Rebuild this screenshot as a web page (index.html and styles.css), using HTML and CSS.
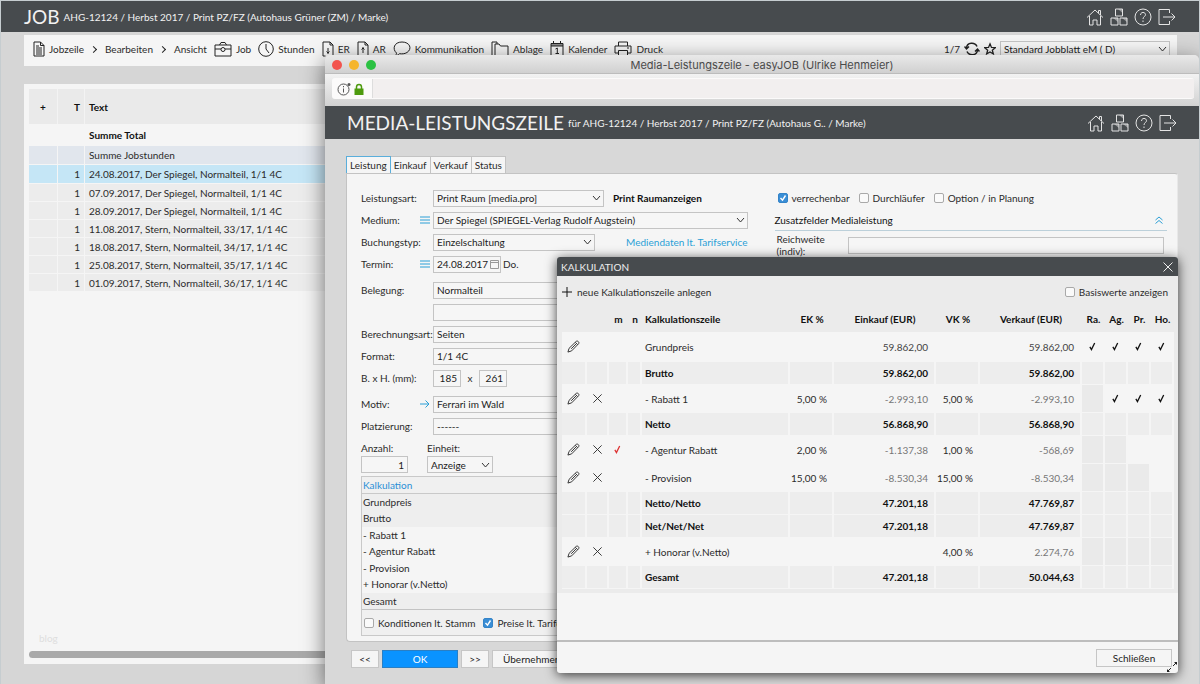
FILE: index.html
```html
<!DOCTYPE html>
<html lang="de">
<head>
<meta charset="utf-8">
<title>JOB AHG-12124</title>
<link rel="stylesheet" href="styles.css">
</head>
<body>
<svg class="sprite" aria-hidden="true">
  <symbol id="i-home" viewBox="0 0 18 18"><path d="M1 9.500 9 2l8 7.500M3.500 8v9H7v-5h4v5h3.500V8M12.500 5V2.500h2V7"/></symbol>
  <symbol id="i-boxes" viewBox="0 0 18 18"><path d="M5.500 1h7v7h-7zM1 10h7v7H1zM10 10h7v7h-7z"/><path class="solid" d="M8 1h4.500v4zM3 10h5v4zM12 10h5v4z"/></symbol>
  <symbol id="i-help" viewBox="0 0 18 18"><circle cx="9" cy="9" r="8"/><path d="M6.500 7c0-3.500 5-3.200 5-.3 0 1.800-2.500 2-2.500 4.300M9 12.500V14"/></symbol>
  <symbol id="i-exit" viewBox="0 0 18 18"><path d="M11.500 5V1.500H1v15h10.500V13M5 9h12M13.500 5.500 17 9l-3.500 3.500"/></symbol>
  <symbol id="i-doc" viewBox="0 0 12 16"><path d="M1 1h6.500L11 4.500V15H1zM7.500 1v3.500H11M3 5h3M3 7h6M3 9h6M3 11h6M3 13h6"/></symbol>
  <symbol id="i-case" viewBox="0 0 18 16"><path d="M1 4h16v11H1zM5.500 4 7 1.500h4L12.500 4M1 8h6M11 8h6"/><circle cx="9" cy="8.500" r="2"/></symbol>
  <symbol id="i-clock" viewBox="0 0 16 16"><circle cx="8" cy="8" r="7.300"/><path d="M8 3v5l3 4"/></symbol>
  <symbol id="i-in" viewBox="0 0 12 16"><path d="M3.500 15H1V1h7l3 3v11H8.500M8 1v3h3M6 7v6M4.500 10.500 6 12l1.500-1.500"/></symbol>
  <symbol id="i-out" viewBox="0 0 12 16"><path d="M3.500 15H1V1h7l3 3v11H8.500M8 1v3h3M6 6v6M4.500 8.500 6 7l1.500 1.500"/></symbol>
  <symbol id="i-talk" viewBox="0 0 18 16"><path d="M2 15c1-1 1.500-2 1.500-3C-1 8 1 1 9 1s10.500 7 5 10.500c-2.500 1.500-5 1.500-7.500 1.200C5 14 4 14.500 2 15z"/></symbol>
  <symbol id="i-folder" viewBox="0 0 18 16"><path d="M1 15V1h5v2M4 15V3h4l1.500 2H17v10z"/></symbol>
  <symbol id="i-cal" viewBox="0 0 14 16"><path d="M1 2.500h12V15H1zM1 5h12M3.500 0v3M10.500 0v3M5.500 8 7.300 7v5.500M5.500 12.500h3.500"/><path class="solid" d="M1 2.500h12V5H1z"/></symbol>
  <symbol id="i-print" viewBox="0 0 18 16"><path d="M4.500 5V1h9v4M4.500 12H1V5h16v7h-3.500M4.500 9.500h9V15h-9zM13 7h2"/></symbol>
  <symbol id="i-reload" viewBox="0 0 16 14"><path d="M2.500 6C3 0 11 0 13 4.500M13.500 8c-.5 6-8.500 6-10.500 1.500M.5 4.500l2 2.500L5 4.500M11 9.500 13.500 7l2 2.500"/></symbol>
  <symbol id="i-star" viewBox="0 0 14 14"><path d="m7 1 1.700 4.200 4.500.3-3.500 2.900 1.200 4.400L7 10.400l-3.900 2.400 1.200-4.400L.8 5.500l4.500-.3z"/></symbol>
  <symbol id="i-pen" viewBox="0 0 14 14"><path d="M1 13l1.200-4L9.800 1.600c1.500-1.400 4 .9 2.600 2.500L5 11.700zM9 2.500 11.500 5M10 4 4.500 9.500"/></symbol>
  <symbol id="i-x" viewBox="0 0 12 12"><path d="m1.500 1.500 9 9M10.500 1.500l-9 9"/></symbol>
  <symbol id="i-check" viewBox="0 0 8 10"><path d="M1 5.500 2.800 8.500 6.500 1"/></symbol>
  <symbol id="i-list" viewBox="0 0 10 8"><path d="M0 1h10M0 4h10M0 7h10"/></symbol>
  <symbol id="i-arrow" viewBox="0 0 10 8"><path d="M0 4h9M5.500.5 9 4 5.500 7.500"/></symbol>
</svg>

<main class="desktop">
  <header class="bar">
    <h1 class="bar-title">JOB</h1>
    <p class="bar-sub">AHG-12124 / Herbst 2017 / Print PZ/FZ (Autohaus Grüner (ZM) / Marke)</p>
    <nav class="bar-icons">
      <a href="#" aria-label="Start"><svg><use href="#i-home"/></svg></a>
      <a href="#" aria-label="Module"><svg><use href="#i-boxes"/></svg></a>
      <a href="#" aria-label="Hilfe"><svg><use href="#i-help"/></svg></a>
      <a href="#" aria-label="Abmelden"><svg><use href="#i-exit"/></svg></a>
    </nav>
  </header>

  <nav class="tools">
    <button class="tool"><svg class="w12"><use href="#i-doc"/></svg>Jobzeile</button>
    <button class="tool"><i class="caret"></i>Bearbeiten</button>
    <button class="tool"><i class="caret"></i>Ansicht</button>
    <button class="tool"><svg class="w18"><use href="#i-case"/></svg>Job</button>
    <button class="tool"><svg class="w16"><use href="#i-clock"/></svg>Stunden</button>
    <button class="tool"><svg class="w12"><use href="#i-in"/></svg>ER</button>
    <button class="tool"><svg class="w12"><use href="#i-out"/></svg>AR</button>
    <button class="tool"><svg class="w18"><use href="#i-talk"/></svg>Kommunikation</button>
    <button class="tool"><svg class="w18"><use href="#i-folder"/></svg>Ablage</button>
    <button class="tool"><svg class="w14"><use href="#i-cal"/></svg>Kalender</button>
    <button class="tool"><svg class="w18"><use href="#i-print"/></svg>Druck</button>
    <div class="tools-end">
      <span>1/7</span>
      <button class="tool" aria-label="Aktualisieren"><svg class="w16 bold"><use href="#i-reload"/></svg></button>
      <button class="tool" aria-label="Favorit"><svg class="w12 bold"><use href="#i-star"/></svg></button>
      <select class="field view" aria-label="Jobblatt"><option>Standard Jobblatt eM ( D)</option></select>
    </div>
  </nav>

  <section class="jobs">
    <table class="job-table">
      <colgroup><col class="j-plus"><col class="j-t"><col></colgroup>
      <thead><tr><th>+</th><th class="num">T</th><th>Text</th></tr></thead>
      <tbody>
        <tr class="total"><td></td><td></td><td>Summe Total</td></tr>
        <tr class="hours"><td></td><td></td><td>Summe Jobstunden</td></tr>
        <tr class="active"><td></td><td class="num">1</td><td>24.08.2017, Der Spiegel, Normalteil, 1/1 4C</td></tr>
        <tr><td></td><td class="num">1</td><td>07.09.2017, Der Spiegel, Normalteil, 1/1 4C</td></tr>
        <tr><td></td><td class="num">1</td><td>28.09.2017, Der Spiegel, Normalteil, 1/1 4C</td></tr>
        <tr><td></td><td class="num">1</td><td>11.08.2017, Stern, Normalteil, 33/17, 1/1 4C</td></tr>
        <tr><td></td><td class="num">1</td><td>18.08.2017, Stern, Normalteil, 34/17, 1/1 4C</td></tr>
        <tr><td></td><td class="num">1</td><td>25.08.2017, Stern, Normalteil, 35/17, 1/1 4C</td></tr>
        <tr><td></td><td class="num">1</td><td>01.09.2017, Stern, Normalteil, 36/17, 1/1 4C</td></tr>
      </tbody>
    </table>
    <p class="mark">blog</p>
    <div class="scroll"></div>
  </section>

  <section class="window">
    <div class="chrome-title">
      <span class="lights"><i class="close-light"></i><i class="min-light"></i><i class="max-light"></i></span>
      <span>Media-Leistungszeile - easyJOB (Ulrike Henmeier)</span>
    </div>
    <div class="chrome-url">
      <div class="url">
        <svg class="info" viewBox="0 0 14 14"><circle cx="6.500" cy="7.500" r="5.500"/><path d="M6.500 6.500v4M6.500 4v1.300"/><circle class="dot" cx="12" cy="2.500" r="1.500"/></svg>
        <svg class="lock" viewBox="0 0 10 12"><path class="shackle" d="M2.500 6V4c0-3.500 5-3.500 5 0v2"/><path class="case" d="M.5 5.500h9V12h-9z"/></svg>
        <input class="url-input" type="text" aria-label="Adresse">
      </div>
    </div>
    <header class="bar bar-media">
      <h2 class="bar-title">MEDIA-LEISTUNGSZEILE</h2>
      <p class="bar-sub">für AHG-12124 / Herbst 2017 / Print PZ/FZ (Autohaus G.. / Marke)</p>
      <nav class="bar-icons">
        <a href="#" aria-label="Start"><svg><use href="#i-home"/></svg></a>
        <a href="#" aria-label="Module"><svg><use href="#i-boxes"/></svg></a>
        <a href="#" aria-label="Hilfe"><svg><use href="#i-help"/></svg></a>
        <a href="#" aria-label="Abmelden"><svg><use href="#i-exit"/></svg></a>
      </nav>
    </header>

    <div class="media">
      <nav class="tabs">
        <button class="tab on">Leistung</button><button class="tab">Einkauf</button><button class="tab">Verkauf</button><button class="tab">Status</button>
      </nav>
      <form class="panel">
        <div class="col-left">
          <div class="row"><label for="art">Leistungsart:</label>
            <select id="art" class="field w-art"><option>Print Raum [media.pro]</option></select><strong>Print Raumanzeigen</strong></div>
          <div class="row"><label for="medium">Medium:</label><svg class="hint"><use href="#i-list"/></svg>
            <select id="medium" class="field grow"><option>Der Spiegel (SPIEGEL-Verlag Rudolf Augstein)</option></select></div>
          <div class="row"><label for="typ">Buchungstyp:</label>
            <select id="typ" class="field w-typ"><option>Einzelschaltung</option></select><a class="tarif" href="#">Mediendaten lt. Tarifservice</a></div>
          <div class="row"><label for="termin">Termin:</label><svg class="hint"><use href="#i-list"/></svg>
            <input id="termin" class="field w-date" value="24.08.2017"><span class="day">Do.</span></div>
          <div class="row space"><label for="beleg">Belegung:</label><input id="beleg" class="field grow" value="Normalteil"></div>
          <div class="row"><label for="beleg2"></label><input id="beleg2" class="field grow" aria-label="Belegung Zusatz"></div>
          <div class="row"><label for="berech">Berechnungsart:</label><input id="berech" class="field grow" value="Seiten"></div>
          <div class="row"><label for="format">Format:</label><input id="format" class="field grow" value="1/1 4C"></div>
          <div class="row"><label for="breite">B. x H. (mm):</label><input id="breite" class="field w-mm" value="185"><span class="times">x</span><input class="field w-mm" aria-label="Höhe" value="261"></div>
          <div class="row space"><label for="motiv">Motiv:</label><svg class="hint"><use href="#i-arrow"/></svg><input id="motiv" class="field grow" value="Ferrari im Wald"></div>
          <div class="row"><label for="platz">Platzierung:</label><input id="platz" class="field grow" value="------"></div>
          <div class="amounts">
            <label>Anzahl:<input class="field w-count" value="1"></label>
            <label>Einheit:<select class="field w-unit"><option>Anzeige</option></select></label>
          </div>
          <div class="calc">
            <h3>Kalkulation</h3>
            <ul>
              <li class="sum">Grundpreis</li><li class="sum">Brutto</li><li>- Rabatt 1</li><li>- Agentur Rabatt</li><li>- Provision</li><li>+ Honorar (v.Netto)</li><li class="sum">Gesamt</li>
            </ul>
            <div class="calc-opts">
              <label class="check"><input type="checkbox">Konditionen lt. Stamm</label>
              <label class="check"><input type="checkbox" checked>Preise lt. Tarifdaten</label>
            </div>
          </div>
        </div>
        <div class="col-right">
          <div class="checks">
            <label class="check"><input type="checkbox" checked>verrechenbar</label>
            <label class="check"><input type="checkbox">Durchläufer</label>
            <label class="check"><input type="checkbox">Option / in Planung</label>
          </div>
          <h3 class="section">Zusatzfelder Medialeistung<svg viewBox="0 0 8 8"><path d="m.5 4 3.500-3 3.500 3M.5 7.500 4 4.500l3.500 3"/></svg></h3>
          <div class="reach"><label for="reach">Reichweite (indiv):</label><input id="reach" class="field grow"></div>
        </div>
      </form>
      <div class="actions">
        <button class="btn step">&lt;&lt;</button><button class="btn ok">OK</button><button class="btn step">&gt;&gt;</button><button class="btn apply">Übernehmen</button>
      </div>
    </div>

    <section class="dialog" role="dialog" aria-label="Kalkulation">
      <header class="dialog-bar"><h2>KALKULATION</h2><button aria-label="Dialog schließen"><svg><use href="#i-x"/></svg></button></header>
      <div class="dialog-top">
        <button class="add"><svg viewBox="0 0 10 10"><path d="M5 0v10M0 5h10"/></svg>neue Kalkulationszeile anlegen</button>
        <label class="check"><input type="checkbox">Basiswerte anzeigen</label>
      </div>
      <div class="grid-wrap">
      <table class="grid">
        <colgroup><col class="c-pen"><col class="c-del"><col class="c-m"><col class="c-n"><col><col class="c-pct"><col class="c-eur"><col class="c-pct"><col class="c-eur"><col class="c-flag"><col class="c-flag"><col class="c-flag"><col class="c-flag"></colgroup>
        <thead><tr><th></th><th></th><th>m</th><th>n</th><th class="name">Kalkulationszeile</th><th>EK %</th><th>Einkauf (EUR)</th><th>VK %</th><th>Verkauf (EUR)</th><th>Ra.</th><th>Ag.</th><th>Pr.</th><th>Ho.</th></tr></thead>
        <tbody>
          <tr class="first"><td><svg class="pen"><use href="#i-pen"/></svg></td><td></td><td></td><td></td><td class="name">Grundpreis</td><td></td><td class="num dark">59.862,00</td><td></td><td class="num dark">59.862,00</td><td><svg class="tick"><use href="#i-check"/></svg></td><td><svg class="tick"><use href="#i-check"/></svg></td><td><svg class="tick"><use href="#i-check"/></svg></td><td><svg class="tick"><use href="#i-check"/></svg></td></tr>
          <tr class="sum"><td></td><td></td><td></td><td></td><td class="name">Brutto</td><td></td><td class="num">59.862,00</td><td></td><td class="num">59.862,00</td><td></td><td></td><td></td><td></td></tr>
          <tr><td><svg class="pen"><use href="#i-pen"/></svg></td><td><svg class="del"><use href="#i-x"/></svg></td><td></td><td></td><td class="name">- Rabatt 1</td><td class="pct">5,00 %</td><td class="num">-2.993,10</td><td class="pct">5,00 %</td><td class="num">-2.993,10</td><td class="off"></td><td><svg class="tick"><use href="#i-check"/></svg></td><td><svg class="tick"><use href="#i-check"/></svg></td><td><svg class="tick"><use href="#i-check"/></svg></td></tr>
          <tr class="sum"><td></td><td></td><td></td><td></td><td class="name">Netto</td><td></td><td class="num">56.868,90</td><td></td><td class="num">56.868,90</td><td></td><td></td><td></td><td></td></tr>
          <tr><td><svg class="pen"><use href="#i-pen"/></svg></td><td><svg class="del"><use href="#i-x"/></svg></td><td><svg class="tick alert"><use href="#i-check"/></svg></td><td></td><td class="name">- Agentur Rabatt</td><td class="pct">2,00 %</td><td class="num">-1.137,38</td><td class="pct">1,00 %</td><td class="num">-568,69</td><td class="off"></td><td class="off"></td><td></td><td></td></tr>
          <tr><td><svg class="pen"><use href="#i-pen"/></svg></td><td><svg class="del"><use href="#i-x"/></svg></td><td></td><td></td><td class="name">- Provision</td><td class="pct">15,00 %</td><td class="num">-8.530,34</td><td class="pct">15,00 %</td><td class="num">-8.530,34</td><td class="off"></td><td class="off"></td><td class="off"></td><td></td></tr>
          <tr class="sum"><td></td><td></td><td></td><td></td><td class="name">Netto/Netto</td><td></td><td class="num">47.201,18</td><td></td><td class="num">47.769,87</td><td></td><td></td><td></td><td></td></tr>
          <tr class="sum"><td></td><td></td><td></td><td></td><td class="name">Net/Net/Net</td><td></td><td class="num">47.201,18</td><td></td><td class="num">47.769,87</td><td></td><td></td><td></td><td></td></tr>
          <tr><td><svg class="pen"><use href="#i-pen"/></svg></td><td><svg class="del"><use href="#i-x"/></svg></td><td></td><td></td><td class="name">+ Honorar (v.Netto)</td><td></td><td></td><td class="pct">4,00 %</td><td class="num">2.274,76</td><td class="off"></td><td class="off"></td><td class="off"></td><td class="off"></td></tr>
          <tr class="sum"><td></td><td></td><td></td><td></td><td class="name">Gesamt</td><td></td><td class="num">47.201,18</td><td></td><td class="num">50.044,63</td><td></td><td></td><td></td><td></td></tr>
        </tbody>
      </table>
      </div>
      <footer class="dialog-foot">
        <button class="btn close">Schließen</button>
        <svg class="resize" viewBox="0 0 10 10"><path d="m1 9 3-3M6 4l3-3"/><path class="tip" d="M0 10V7l3 3zM10 0v3L7 0z"/></svg>
      </footer>
    </section>
  </section>
</main>
</body>
</html>
```
FILE: styles.css
```css
* { box-sizing: border-box; }

body {
  margin: 0;
  background: #d6d6d6;
  color: #2b2b2b;
  font: 10px/12px Lato, "Liberation Sans", sans-serif;
}

h1, h2, h3, p, ul { margin: 0; padding: 0; font-size: 10px; font-weight: 400; }
ul { list-style: none; }
button, input, select { font: inherit; color: inherit; margin: 0; }
button { padding: 0; border: 0; background: none; }
a { color: inherit; text-decoration: none; }
svg { fill: none; stroke: currentColor; stroke-width: 1; flex: none; }
.sprite { display: none; }
table { width: 100%; border-collapse: separate; border-spacing: 0; table-layout: fixed; }
th, td { padding: 0; }

.desktop {
  position: relative;
  display: flex;
  flex-direction: column;
  min-height: 100vh;
  overflow: hidden;
  border: 1px solid #c6cdd0;
  border-bottom: 0;
}

/* dark title bars */
.bar {
  flex: none;
  display: flex;
  align-items: center;
  gap: 4px;
  height: 31px;
  padding: 0 23px;
  background: #474b4e;
  color: #f2f2f2;
}
.bar-title { font-size: 19px; line-height: 24px; }
.bar-sub { line-height: 14px; }
.bar-icons { display: flex; gap: 6px; margin-left: auto; }
.bar-icons a { display: flex; }
.bar-icons svg { width: 18px; height: 18px; color: #e4e4e4; }
.solid { fill: currentColor; fill-opacity: .5; stroke: none; }

/* toolbar */
.tools {
  display: flex;
  align-items: center;
  gap: 7px;
  height: 31px;
  margin: 3px 22px 0 23px;
  padding: 0 7px 3px 9px;
  background: #f5f5f5;
}
.tool { display: flex; align-items: center; gap: 4px; }
.tool svg { height: 16px; color: #222; }
.w12 { width: 12px; }
.w14 { width: 14px; }
.w16 { width: 16px; }
.w18 { width: 18px; }
.tool .bold { stroke-width: 1.5; height: 14px; }
.caret {
  width: 5px;
  height: 5px;
  margin-right: 5px;
  border: solid #222;
  border-width: 1px 1px 0 0;
  transform: rotate(45deg);
}
.tools-end { display: flex; align-items: center; gap: 4px; margin-left: auto; }
.view { width: 170px; }

/* fields */
.field {
  height: 17px;
  min-width: 0;
  padding: 0 3px;
  border: 1px solid #c4c4c4;
  border-radius: 0;
  background: #f6f6f6;
  color: #1c1c1c;
}
select.field {
  appearance: none;
  background: #f6f6f6 url("data:image/svg+xml,%3Csvg xmlns='http://www.w3.org/2000/svg' width='9' height='6'%3E%3Cpath d='M1 1l3.500 4L8 1' fill='none' stroke='%23333'/%3E%3C/svg%3E") no-repeat right 2px center;
}
.grow { flex: 1; }
.check { display: flex; align-items: center; gap: 4px; }
.check input {
  appearance: none;
  width: 10px;
  height: 10px;
  border: 1px solid #a9a9a9;
  border-radius: 2px;
  background: #fafafa;
}
.check input:checked {
  border-color: #3484c8;
  background: #3a8ed6 url("data:image/svg+xml,%3Csvg xmlns='http://www.w3.org/2000/svg' width='8' height='8'%3E%3Cpath d='M1.500 4l2 2.200L6.500 1.500' fill='none' stroke='white' stroke-width='1.400'/%3E%3C/svg%3E") no-repeat center;
}
.btn {
  height: 18px;
  border: 1px solid #c6c6c6;
  background: #f5f5f5;
  color: #1c1c1c;
}

/* job list */
.jobs {
  flex: 1;
  display: flex;
  flex-direction: column;
  margin: 18px 0 20px 23px;
  padding: 5px 0 6px 5px;
  background: #f5f5f5;
}
.j-plus { width: 29px; }
.j-t { width: 27px; }
.job-table th { height: 35px; background: #eaeaea; border-right: 1px solid #f3f3f3; text-align: left; color: #111; }
.job-table th:first-child { text-align: center; }
.job-table .num { text-align: right; padding-right: 4px; }
.job-table td:last-child, .job-table th:last-child { padding-left: 4px; }
.job-table td { height: 18px; background: #ececec; border: solid #f5f5f5; border-width: 0 1px 1px 0; }
.job-table .total td { height: 22px; background: none; font-weight: 700; color: #111; }
.job-table .hours td { height: 19px; background: #e1e6ed; }
.job-table .active td { background: #c5e6f6; height: 19px; }
.mark { margin: auto 0 7px 10px; color: #dedede; }
.scroll { height: 7px; border-radius: 4px; background: #a9a9a9; }

/* browser window */
.window {
  position: absolute;
  inset: 54px 0 0 324px;
  display: flex;
  flex-direction: column;
  border-radius: 5px 5px 0 0;
  background: #d8d8d8;
  box-shadow: 0 6px 22px rgba(0, 0, 0, .55);
}
.chrome-title {
  position: relative;
  flex: none;
  display: flex;
  justify-content: center;
  align-items: center;
  height: 19px;
  padding-top: 2px;
  border-bottom: 1px solid #bcbcbc;
  border-radius: 5px 5px 0 0;
  background: linear-gradient(#e9e9e9, #d0d0d0);
  color: #4a4a4a;
  font: 11px/14px Inter, sans-serif;
}
.lights { position: absolute; left: 7px; display: flex; gap: 7px; }
.lights i { width: 10px; height: 10px; border-radius: 50%; }
.close-light { background: #f2544e; }
.min-light { background: #f5b52c; }
.max-light { background: #2bc142; }
.chrome-url { flex: none; padding: 4px 5px 7px 7px; background: linear-gradient(#f2f2f2, #d2d2d2); }
.url { display: flex; align-items: center; gap: 3px; height: 21px; padding-left: 5px; border-radius: 3px; background: #fbfafa; }
.info { width: 14px; height: 14px; color: #555; }
.info .dot { fill: #555; stroke: none; }
.lock { width: 10px; height: 12px; color: #4d9a0d; }
.lock .case { fill: currentColor; stroke: none; }
.lock .shackle { stroke-width: 1.500; }
.url-input { flex: 1; height: 19px; margin-left: 5px; border: 0; border-left: 1px solid #ddd; background: #f2efef; }
.bar-media { height: 33px; padding: 0 22px; }

/* media form */
.media { flex: 1; display: flex; flex-direction: column; padding: 17px 21px 16px; }
.tabs { display: flex; }
.tab {
  height: 17px;
  padding: 0 3px;
  border: 1px solid #c3c3c3;
  border-width: 1px 1px 0 0;
  background: #f5f5f5;
}
.tab.on { border: 1px solid #5aaedb; border-bottom: 0; }
.panel {
  flex: 1;
  display: grid;
  grid-template-columns: 387fr 393fr;
  column-gap: 27px;
  padding: 13px 10px 2px 14px;
  border: 1px solid #c3c3c3;
  border-right-color: #e8e8e8;
  border-radius: 0 3px 4px 4px;
  background: #f5f5f5;
}
.row { display: flex; align-items: center; height: 22px; }
.row.space { margin-top: 4px; }
.row label { width: 72px; white-space: nowrap; }
.row label:has(+ .hint) { width: 59px; }
.hint { width: 10px; height: 8px; margin-right: 3px; color: #2a9fd6; }
.w-art { width: 171px; margin-right: 9px; }
.w-typ { width: 162px; }
.w-date {
  width: 68px;
  background: #f6f6f6 url("data:image/svg+xml,%3Csvg xmlns='http://www.w3.org/2000/svg' width='9' height='10'%3E%3Cpath d='M.5 1.500h8v8h-8zM.5 3.500h8' fill='none' stroke='%23999'/%3E%3C/svg%3E") no-repeat right 1px center;
}
.day { margin-left: 2px; }
.w-mm { width: 28px; text-align: right; }
.times { width: 18px; text-align: center; }
strong { color: #111; }
.tarif { margin-left: auto; color: #2a9fd6; }
.amounts { display: flex; gap: 19px; margin-top: 5px; }
.amounts label { display: flex; flex-direction: column; gap: 2px; }
.w-count { width: 47px; text-align: right; }
.w-unit { width: 66px; }
.calc { margin-top: 3px; border: 1px solid #c9c9c9; background: #f0f0f0; }
.calc h3 { height: 17px; padding: 2px 1px; border-bottom: 1px solid #c9c9c9; color: #2a8fd6; }
.calc ul { border-bottom: 1px solid #c3c3c3; background: #f5f5f5; }
.calc li { padding: 2px 1px; line-height: 12px; height: 16px; }
.calc li:nth-child(even) { height: 17px; }
.calc .sum { background: #eee; }
.calc-opts { display: flex; gap: 8px; padding: 7px 2px 6px; }
.checks { display: flex; gap: 9px; align-items: center; height: 22px; padding-left: 3px; }
.section {
  display: flex;
  justify-content: space-between;
  align-items: center;
  height: 22px;
  padding: 0 4px 0 0;
  border-bottom: 1px solid #bcd0da;
  color: #111;
}
.section svg { width: 8px; height: 8px; color: #2a9fd6; }
.reach { display: flex; align-items: center; padding: 2px 3px 0 2px; }
.reach label { width: 71px; padding-right: 20px; }
.actions { display: flex; gap: 3px; padding: 8px 0 0 5px; }
.step { width: 28px; }
.ok { width: 76px; border-color: #2a7fc4; background: #0a93ff; color: #fff; }
.apply { padding: 0 10px; }

/* calculation dialog */
.dialog {
  position: absolute;
  inset: 202px 21px 11px 232px;
  display: flex;
  flex-direction: column;
  border-radius: 3px;
  background: #f5f5f5;
  box-shadow: 0 2px 12px rgba(0, 0, 0, .75);
}
.dialog-bar {
  display: flex;
  justify-content: space-between;
  align-items: center;
  height: 19px;
  padding: 0 4px;
  border-radius: 3px 3px 0 0;
  background: #474b4e;
  color: #ededed;
}
.dialog-bar button { display: flex; }
.dialog-bar svg { width: 12px; height: 12px; }
.dialog-top { display: flex; justify-content: space-between; align-items: center; height: 31px; padding: 0 10px 0 5px; background: #ebebeb; }
.add { display: flex; align-items: center; gap: 5px; }
.add svg { width: 10px; height: 10px; color: #111; }
.grid-wrap { padding: 0 4px 4px 5px; background: #ebebeb; }
.grid { background: #f5f5f5; }
.c-pen { width: 25px; }
.c-del { width: 22px; }
.c-m { width: 19px; }
.c-n { width: 14px; }
.c-pct { width: 44px; }
.c-eur { width: 102px; }
.c-flag { width: 23px; }
.grid th { height: 25px; padding-bottom: 2px; background: #ebebeb; color: #111; text-align: center; white-space: nowrap; }
.grid td { height: 28px; border-right: 2px solid #f5f5f5; border-bottom: 1px solid #f5f5f5; text-align: center; white-space: nowrap; }
.grid .first td { height: 30px; }
.grid .sum td { height: 23px; background: #ededed; font-weight: 700; color: #111; }
.grid .name { padding-left: 3px; text-align: left; }
.grid .pct { padding-right: 5px; text-align: right; }
.grid .num { padding-right: 6px; text-align: right; color: #777; }
.grid .dark { color: #444; }
.grid .off { background: #eaeaea; }
.grid svg { display: block; margin: 0 auto; }
.grid .pen { width: 13px; height: 13px; }
.grid .del { width: 11px; height: 11px; }
.grid .tick { width: 7px; height: 9px; stroke-width: 1.500; color: #111; }
.grid .alert { color: #d33; }
.dialog-foot {
  position: relative;
  display: flex;
  justify-content: flex-end;
  margin-top: auto;
  padding: 7px 6px 6px;
  border-top: 2px solid #bdbdbd;
}
.close { width: 76px; }
.resize { position: absolute; right: 1px; bottom: 1px; width: 10px; height: 10px; color: #222; }
.resize .tip { fill: currentColor; stroke: none; }
```
